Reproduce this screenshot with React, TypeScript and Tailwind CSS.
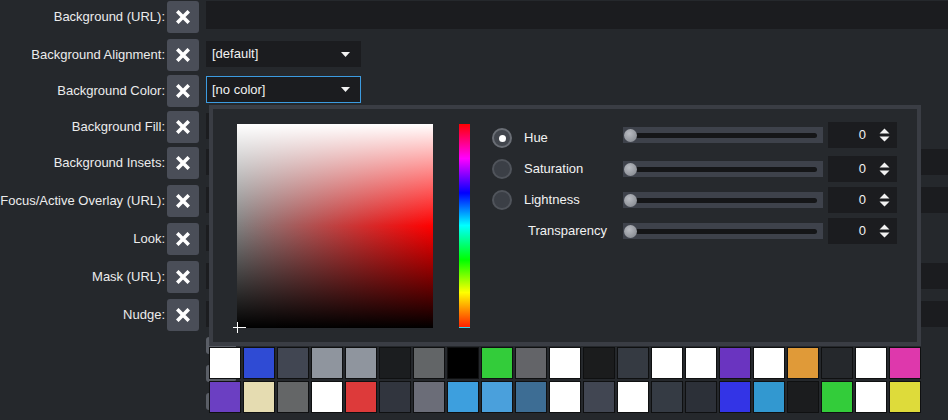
import React from 'react';

type Row = { label: string; h: string; input: 'full' | 'drop' | 'none'; text?: string; focus?: boolean };

const rows: Row[] = [
  { label: 'Background (URL):', h: 'h-[38px]', input: 'full' },
  { label: 'Background Alignment:', h: 'h-[36px]', input: 'drop', text: '[default]' },
  { label: 'Background Color:', h: 'h-[36px]', input: 'drop', text: '[no color]', focus: true },
  { label: 'Background Fill:', h: 'h-[36px]', input: 'drop' },
  { label: 'Background Insets:', h: 'h-[38px]', input: 'full' },
  { label: 'Focus/Active Overlay (URL):', h: 'h-[38px]', input: 'full' },
  { label: 'Look:', h: 'h-[38px]', input: 'drop' },
  { label: 'Mask (URL):', h: 'h-[38px]', input: 'full' },
  { label: 'Nudge:', h: 'h-[38px]', input: 'full' },
];

const swatches = [
  ['#ffffff', '#2f4bd4', '#414652', '#8f959e', '#8f959e', '#1b1d1f', '#626567', '#000000', '#33cc3a', '#636468', '#ffffff',
    '#1b1c1d', '#353a42', '#ffffff', '#ffffff', '#6a34c0', '#ffffff', '#e09a38', '#25282c', '#ffffff', '#de38ac'],
  ['#6b3fc2', '#e5dcb1', '#646667', '#ffffff', '#dd3a3a', '#31353e', '#6b6d78', '#3d9fde', '#4aa0dc', '#3d6d94', '#ffffff',
    '#414652', '#ffffff', '#353b44', '#2c3038', '#3334e6', '#3298d0', '#1b1c1e', '#33cc3a', '#ffffff', '#dedb3a'],
];

function XIcon() {
  return (
    <svg width="14" height="14" viewBox="0 0 14 14">
      <path d="M2.5 2.5 L11.5 11.5 M11.5 2.5 L2.5 11.5" stroke="#fff" strokeWidth="3.6" strokeLinecap="square" />
    </svg>
  );
}

function Caret() {
  return (
    <svg width="9" height="5" viewBox="0 0 9 5">
      <path d="M0 0 L9 0 L4.5 5 Z" fill="#f2f2f2" />
    </svg>
  );
}

function Spin() {
  return (
    <div className="flex h-[26px] w-[69px] items-center justify-end bg-[#1b1c1f] pr-[7px]">
      <span className="mr-[13px] text-[13px] text-[#f2f2f2]">0</span>
      <svg width="11" height="14" viewBox="0 0 11 14">
        <path d="M0.5 5.5 L5.5 0.5 L10.5 5.5 Z M0.5 8.5 L5.5 13.5 L10.5 8.5 Z" fill="#f2f2f2" />
      </svg>
    </div>
  );
}

function Slider() {
  return (
    <div className="relative flex h-[16px] w-[200px] items-center bg-[#3e424b] px-[6px]">
      <div className="h-[5px] w-full rounded-full bg-[#151618]" />
      <div className="absolute left-[1px] top-[2px] h-[13px] w-[13px] rounded-full bg-[radial-gradient(circle_at_40%_35%,#b8bbc1,#7d8188)]" />
    </div>
  );
}

function Radio({ on }: { on?: boolean }) {
  return (
    <div
      className={
        on
          ? 'flex h-[20px] w-[20px] items-center justify-center rounded-full border-2 border-[#6a6e75] bg-[#42464d]'
          : 'h-[20px] w-[20px] rounded-full border-2 border-[#50545b] bg-[#3b3f46]'
      }
    >
      {on && <div className="h-[7px] w-[7px] rounded-full bg-white" />}
    </div>
  );
}

function ColorPopup() {
  const ctl = [
    { name: 'Hue', radio: true, on: true, mt: 'mt-[-2px]', lift: 'mt-[6px]' },
    { name: 'Saturation', radio: true, on: false, mt: 'mt-[8px]', lift: '' },
    { name: 'Lightness', radio: true, on: false, mt: 'mt-[5px]', lift: '' },
    { name: 'Transparency', radio: false, on: false, mt: 'mt-[5px]', lift: '' },
  ];
  return (
    <div className="absolute left-[209px] top-[105px] flex w-[712px] flex-col gap-[1px]">
      <div className="h-[241px] border-4 border-[#3a3d44] bg-[#26292d]">
        <div className="flex pl-[24px] pt-[15px]">
          {/* saturation / lightness square */}
          <div className="relative h-[204px] w-[196px] bg-[linear-gradient(to_right,#808080,#ff0000)]">
            <div className="absolute inset-0 bg-[linear-gradient(to_bottom,#ffffff,rgba(255,255,255,0)_50%,rgba(0,0,0,0)_50%,#000000)]" />
            <svg className="absolute left-[-4px] top-[198px]" width="14" height="11" viewBox="0 0 14 11">
              <path d="M0 5.5 H13 M4.5 0 V11" stroke="#fff" strokeWidth="1" />
            </svg>
          </div>
          <div className="ml-[26px] h-[204px] w-[11px] border-b border-[#3ad0e8] bg-[linear-gradient(to_bottom,#ff0000,#ff00ff_17%,#0000ff_34%,#00ffff_50%,#00ff00_67%,#ffff00_83%,#ff2000)]" />
          <div className="ml-[22px] flex flex-col">
            {ctl.map((c) => (
              <div key={c.name} className={`flex h-[26px] items-center ${c.mt}`}>
                <div className={`flex w-[131px] items-center ${c.lift}`}>
                  {c.radio ? (
                    <>
                      <Radio on={c.on} />
                      <span className="ml-[12px] text-[13px] text-[#f2f2f2]">{c.name}</span>
                    </>
                  ) : (
                    <span className="ml-[36px] text-[13px] text-[#f2f2f2]">{c.name}</span>
                  )}
                </div>
                <Slider />
                <div className="ml-[5px]">
                  <Spin />
                </div>
              </div>
            ))}
          </div>
        </div>
      </div>
      <div className="flex flex-col gap-[2px]">
        {swatches.map((r, i) => (
          <div key={i} className="flex gap-[2px]">
            {r.map((c, j) => (
              <div key={j} className="h-[32px] w-[32px] border border-[#0f1011]" style={{ backgroundColor: c }} />
            ))}
          </div>
        ))}
      </div>
    </div>
  );
}

export default function App() {
  return (
    <div className="relative h-[420px] w-full overflow-hidden bg-[#25282c] font-['Liberation_Sans',Arial,sans-serif] text-[13px]">
      <div className="flex flex-col pt-[1px]">
        {rows.map((r, i) => (
          <div key={r.label} className={`flex items-start ${r.h}`}>
            <div className="flex h-[32px] w-[165px] items-center justify-end whitespace-nowrap text-[#ececec]">
              {r.label}
            </div>
            <button className="ml-[2px] flex h-[32px] w-[32px] items-center justify-center rounded-[3px] bg-[#4a4e58]">
              <XIcon />
            </button>
            {r.input === 'full' && (
              <div className={i === 0 ? 'ml-[7px] h-[28px] flex-1 bg-[#1b1c1f]' : 'ml-[7px] mt-[2px] h-[26px] flex-1 bg-[#1b1c1f]'} />
            )}
            {r.input === 'drop' && (
              <div
                className={
                  r.focus
                    ? 'ml-[7px] mt-[1px] flex h-[27px] w-[155px] items-center justify-between border border-[#3c9be0] bg-[#1b1c1f] pl-[5px] pr-[10px] text-[#f2f2f2]'
                    : 'ml-[7px] mt-[2px] flex h-[26px] w-[155px] items-center justify-between bg-[#1b1c1f] pl-[6px] pr-[11px] text-[#f2f2f2]'
                }
              >
                <span>{r.text}</span>
                <Caret />
              </div>
            )}
          </div>
        ))}
        <div className="flex flex-col gap-[11px] pl-[206px]">
          <div className="h-[17px] w-[30px] rounded-[3px] bg-[#5a5e66]" />
          <div className="h-[17px] w-[30px] rounded-[3px] bg-[#5a5e66]" />
          <div className="h-[17px] w-[30px] rounded-[3px] bg-[#5a5e66]" />
        </div>
      </div>
      <ColorPopup />
    </div>
  );
}
